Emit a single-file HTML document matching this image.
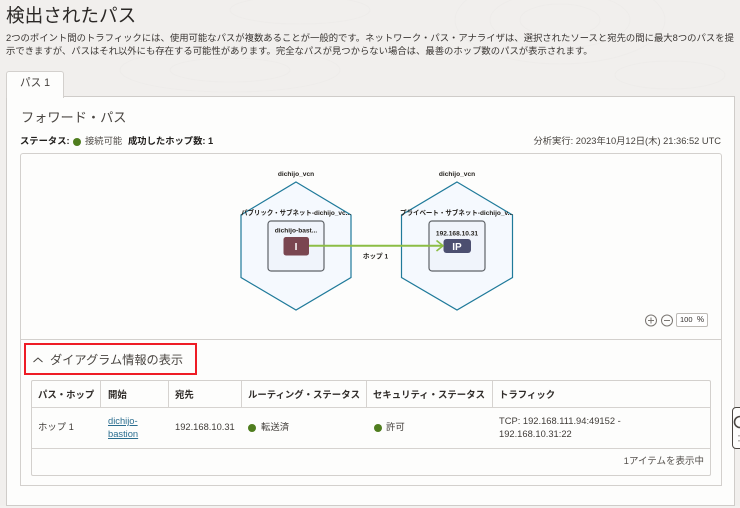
<!DOCTYPE html>
<html lang="ja">
<head>
<meta charset="utf-8">
<title>検出されたパス</title>
<style>
html,body{margin:0;padding:0;}
body{width:740px;height:508px;position:relative;overflow:hidden;background:#f1efed;font-family:"Liberation Sans","Noto Sans CJK JP",sans-serif;color:#312d2a;}
.a{position:absolute;white-space:nowrap;}
.box{position:absolute;box-sizing:border-box;}
.dot{position:absolute;width:8px;height:8px;border-radius:50%;background:#4f7d1e;}
.th{position:absolute;top:381px;height:27px;line-height:27px;font-size:9.4px;font-weight:bold;color:#312d2a;white-space:nowrap;}
.vl{position:absolute;top:381px;height:27px;width:1px;background:#d6d3d0;}
.td{position:absolute;font-size:9.35px;color:#403c38;white-space:nowrap;}
</style>
</head>
<body>
<svg class="a" style="left:0;top:0;" width="740" height="96" viewBox="0 0 740 96" fill="none" stroke="#eeecea" stroke-width="1">
  <ellipse cx="560" cy="20" rx="40" ry="16"/>
  <ellipse cx="560" cy="20" rx="70" ry="28"/>
  <ellipse cx="560" cy="20" rx="105" ry="44"/>
  <ellipse cx="230" cy="70" rx="60" ry="12"/>
  <ellipse cx="230" cy="70" rx="110" ry="22"/>
  <ellipse cx="670" cy="75" rx="55" ry="14"/>
  <ellipse cx="300" cy="10" rx="70" ry="14"/>
</svg>
<div class="a" style="left:6px;top:2px;font-size:18.6px;line-height:28px;color:#2b2826;">検出されたパス</div>
<div class="a" style="left:6px;top:31px;font-size:9.35px;line-height:14px;color:#3a3633;">2つのポイント間のトラフィックには、使用可能なパスが複数あることが一般的です。ネットワーク・パス・アナライザは、選択されたソースと宛先の間に最大8つのパスを提</div>
<div class="a" style="left:6px;top:44px;font-size:9.35px;line-height:14px;color:#3a3633;">示できますが、パスはそれ以外にも存在する可能性があります。完全なパスが見つからない場合は、最善のホップ数のパスが表示されます。</div>

<!-- panel -->
<div class="box" style="left:6px;top:96px;width:729px;height:410px;background:#fdfdfc;border:1px solid #cfccc9;"></div>
<div class="box" style="left:6px;top:71px;width:58px;height:27px;background:#fdfdfc;border:1px solid #d3d0cd;border-bottom:none;border-radius:3px 3px 0 0;"></div>
<div class="a" style="left:20px;top:75px;font-size:10.6px;line-height:16px;color:#45413d;">パス 1</div>

<div class="a" style="left:21px;top:108px;font-size:13.2px;line-height:20px;color:#4a4642;">フォワード・パス</div>
<div class="a" style="left:20px;top:134px;font-size:9.3px;line-height:15px;font-weight:bold;color:#201e1c;">ステータス:</div>
<div class="dot" style="left:73px;top:138px;"></div>
<div class="a" style="left:85px;top:134px;font-size:9.3px;line-height:15px;color:#55514d;">接続可能</div>
<div class="a" style="left:128px;top:134px;font-size:9.3px;line-height:15px;font-weight:bold;color:#201e1c;">成功したホップ数: 1</div>
<div class="a" style="right:19px;top:134px;font-size:9.3px;line-height:15px;color:#45413d;">分析実行: 2023年10月12日(木) 21:36:52 UTC</div>

<!-- diagram box -->
<div class="box" style="left:20px;top:153px;width:702px;height:333px;border:1px solid #d3d0cd;border-radius:3px 3px 0 0;background:#fdfdfc;"></div>
<div class="box" style="left:21px;top:339px;width:700px;height:1px;background:#d3d0cd;"></div>

<svg class="a" style="left:0;top:0;" width="740" height="508" viewBox="0 0 740 508">
  <polygon points="296,182 351,215 351,277.5 296,310 241,277.5 241,215" fill="#f5f9fe" stroke="#1f7a9a" stroke-width="1.2"/>
  <polygon points="457,182 512.5,215 512.5,277.5 457,310 401.5,277.5 401.5,215" fill="#f5f9fe" stroke="#1f7a9a" stroke-width="1.2"/>
  <rect x="268" y="221" width="56" height="50" rx="3" fill="#f0f4fb" stroke="#5f6368" stroke-width="1.2"/>
  <rect x="429" y="221" width="56" height="50" rx="3" fill="#f0f4fb" stroke="#5f6368" stroke-width="1.2"/>
  <rect x="283.5" y="237" width="25.5" height="18.5" rx="2.5" fill="#7a4650"/>
  <rect x="443.5" y="239" width="27.5" height="14" rx="3" fill="#4c4f70"/>
  <path d="M309 245.7H443" stroke="#8cbd45" stroke-width="2" fill="none"/>
  <path d="M436.5 240.5L443 245.7L436.5 251" stroke="#8cbd45" stroke-width="1.6" fill="none"/>
  <g font-family="'Liberation Sans','Noto Sans CJK JP',sans-serif" font-size="6.6" font-weight="bold" fill="#26231f" text-anchor="middle">
    <text x="296" y="176">dichijo_vcn</text>
    <text x="457" y="176">dichijo_vcn</text>
    <text x="296" y="215" textLength="110" lengthAdjust="spacingAndGlyphs">パブリック・サブネット-dichijo_vc...</text>
    <text x="456.5" y="215" textLength="113" lengthAdjust="spacingAndGlyphs">プライベート・サブネット-dichijo_v...</text>
    <text x="296" y="232.5">dichijo-bast...</text>
    <text x="457" y="235.5">192.168.10.31</text>
    <text x="375.5" y="258.5">ホップ 1</text>
    <text x="296" y="250" font-size="10" fill="#fff">I</text>
    <text x="457" y="250" font-size="10" fill="#fff">IP</text>
  </g>
  <!-- zoom controls -->
  <circle cx="651" cy="320.5" r="5.5" fill="none" stroke="#7a7672" stroke-width="1"/>
  <path d="M648 320.5h6M651 317.5v6" stroke="#7a7672" stroke-width="1"/>
  <circle cx="667" cy="320.5" r="5.5" fill="none" stroke="#7a7672" stroke-width="1"/>
  <path d="M664 320.5h6" stroke="#7a7672" stroke-width="1"/>
  <!-- chevrons -->
  <path d="M33.5 362L38 358L42.5 362" fill="none" stroke="#45413d" stroke-width="1"/>
  <path d="M693 426.5L697.5 430.5L702 426.5" fill="none" stroke="#45413d" stroke-width="1"/>
</svg>
<div class="box" style="left:676px;top:313px;width:32px;height:14px;border:1px solid #bdbab6;border-radius:2px;background:#fff;"></div>
<div class="a" style="left:680px;top:314px;font-size:7.5px;line-height:12px;color:#312d2a;">100</div>
<div class="a" style="left:697px;top:314px;font-size:8px;line-height:12px;color:#312d2a;">%</div>

<!-- red highlight -->
<div class="box" style="left:24px;top:343px;width:173px;height:32px;border:2px solid #ee1c25;"></div>
<div class="a" style="left:50px;top:351px;font-size:12.2px;line-height:19px;color:#4a4642;">ダイアグラム情報の表示</div>

<!-- table -->
<div class="box" style="left:31px;top:380px;width:680px;height:96px;border:1px solid #d3d0cd;border-radius:2px;background:#fdfdfc;"></div>
<div class="box" style="left:32px;top:407px;width:678px;height:1px;background:#d6d3d0;"></div>
<div class="box" style="left:32px;top:448px;width:678px;height:1px;background:#d6d3d0;"></div>
<div class="vl" style="left:100px;"></div>
<div class="vl" style="left:168px;"></div>
<div class="vl" style="left:241px;"></div>
<div class="vl" style="left:366px;"></div>
<div class="vl" style="left:492px;"></div>
<div class="th" style="left:38px;">パス・ホップ</div>
<div class="th" style="left:108px;">開始</div>
<div class="th" style="left:175px;">宛先</div>
<div class="th" style="left:248px;">ルーティング・ステータス</div>
<div class="th" style="left:373px;">セキュリティ・ステータス</div>
<div class="th" style="left:499px;">トラフィック</div>

<div class="td" style="left:38px;top:420px;line-height:15px;">ホップ 1</div>
<div class="td" style="left:108px;top:415px;line-height:13px;color:#2a6d8f;text-decoration:underline;">dichijo-<br>bastion</div>
<div class="td" style="left:175px;top:420px;line-height:15px;">192.168.10.31</div>
<div class="dot" style="left:248px;top:424px;"></div>
<div class="td" style="left:261px;top:420px;line-height:15px;">転送済</div>
<div class="dot" style="left:374px;top:424px;"></div>
<div class="td" style="left:386px;top:420px;line-height:15px;">許可</div>
<div class="td" style="left:499px;top:415px;line-height:13px;">TCP: 192.168.111.94:49152 -<br>192.168.10.31:22</div>
<div class="td" style="right:36px;top:454px;line-height:15px;color:#55514d;font-size:9.5px;">1アイテムを表示中</div>

<!-- bottom band -->
<div class="box" style="left:0;top:506px;width:740px;height:2px;background:#f3f2f0;"></div>

<!-- feedback widget -->
<div class="box" style="left:732px;top:407px;width:12px;height:42px;border:1px solid #4a4642;border-radius:4px;background:#fdfdfc;"></div>
<svg class="a" style="left:732px;top:407px;" width="8" height="42" viewBox="0 0 8 42">
  <circle cx="8" cy="15" r="5.5" fill="none" stroke="#4a4642" stroke-width="1.6"/>
  <path d="M7 28v1.5M7 33v1.5" stroke="#77736f" stroke-width="1"/>
</svg>
</body>
</html>
